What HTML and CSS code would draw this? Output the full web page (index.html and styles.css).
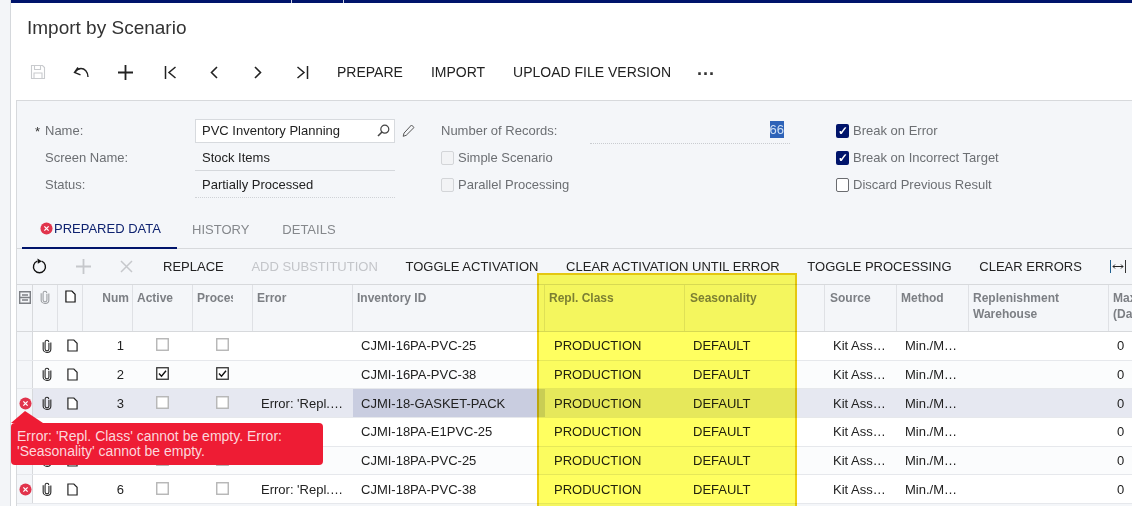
FILE: index.html
```html
<!DOCTYPE html>
<html lang="en">
<head>
<meta charset="utf-8">
<title>Import by Scenario</title>
<link rel="stylesheet" href="styles.css">
</head>
<body>
<svg class="defs" width="0" height="0" aria-hidden="true">
  <symbol id="clip" viewBox="0 0 12 16"><path d="M8.300 4.500v7a2.300 2.300 0 0 1-4.600 0V3.400a2.200 2.200 0 0 1 4.400-.2M8.300 4v7.500M10.600 3.800v8a4.600 3.800 0 0 1-9.200 0V3.500" fill="none" stroke="currentColor" stroke-width="1.300"/></symbol>
  <symbol id="note" viewBox="0 0 12 14"><path d="M1 1h6.500L11 4.500V13H1z" fill="#fff" stroke="currentColor" stroke-width="1.300"/></symbol>
  <symbol id="err" viewBox="0 0 14 14"><circle cx="7" cy="7" r="6.500" fill="#e1344c"/><path d="M4.700 4.700l4.600 4.600M9.300 4.700l-4.600 4.600" stroke="#fff" stroke-width="1.400"/></symbol>
  <symbol id="box" viewBox="0 0 13 13"><rect x=".75" y=".75" width="11.500" height="11.500" fill="#fff" stroke="#b5b5b5" stroke-width="1.400"/></symbol>
  <symbol id="boxon" viewBox="0 0 13 13"><rect x=".75" y=".75" width="11.500" height="11.500" fill="#fff" stroke="#333" stroke-width="1.300"/><path d="M3 6.600l2.500 2.600L10 3.800" fill="none" stroke="#111" stroke-width="1.400"/></symbol>
</svg>
<div class="page">
  <aside class="rail"></aside>
  <main class="main">
    <div class="topbar"><i></i><i></i></div>
    <h1 class="title">Import by Scenario</h1>
    <nav class="toolbar">
      <span class="tool"><svg class="ic muted" width="16" height="16" viewBox="0 0 16 16"><path d="M1.500 1.500h11l2 2v11h-13zM4.500 1.500v4h6v-4M4 14.500V9h8v5.500" fill="none" stroke="currentColor" stroke-width="1.100"/></svg></span>
      <span class="tool undo"><svg class="ic" width="17" height="14" viewBox="0 0 17 14"><path d="M15 12C15 6.500 11.500 3.500 8 3.500 5.500 3.500 3.500 5 1.500 7.500M5 2.500L1.500 7.500l6 2.300" fill="none" stroke="currentColor" stroke-width="1.400"/></svg></span>
      <span class="tool plus-t"><svg class="ic" width="15" height="15" viewBox="0 0 15 15"><path d="M0 7.500h15M7.500 0v15" stroke="currentColor" stroke-width="1.800"/></svg></span>
      <span class="tool"><svg class="ic" width="13" height="13" viewBox="0 0 13 13"><path d="M1.500 0v13M11.500 1L5 6.500l6.500 5.500" fill="none" stroke="currentColor" stroke-width="1.500"/></svg></span>
      <span class="tool"><svg class="ic" width="8" height="13" viewBox="0 0 8 13"><path d="M7 1L1.500 6.500 7 12" fill="none" stroke="currentColor" stroke-width="1.600"/></svg></span>
      <span class="tool"><svg class="ic" width="8" height="13" viewBox="0 0 8 13"><path d="M1 1l5.500 5.500L1 12" fill="none" stroke="currentColor" stroke-width="1.600"/></svg></span>
      <span class="tool"><svg class="ic" width="13" height="13" viewBox="0 0 13 13"><path d="M11.500 0v13M1.500 1L8 6.500 1.500 12" fill="none" stroke="currentColor" stroke-width="1.500"/></svg></span>
      <span class="act first">PREPARE</span>
      <span class="act">IMPORT</span>
      <span class="act">UPLOAD FILE VERSION</span>
      <span class="dots">···</span>
    </nav>
    <section class="panel">
      <form class="form">
        <div class="col-a">
          <div class="row"><span class="lbl"><b class="req">*</b>Name:</span>
            <span class="lookup">PVC Inventory Planning<svg width="13" height="13" viewBox="0 0 13 13"><circle cx="7.800" cy="5.200" r="4" fill="none" stroke="#444" stroke-width="1.200"/><path d="M5 8L1 12" stroke="#444" stroke-width="1.600"/></svg></span>
            <svg class="pencil" width="13" height="13" viewBox="0 0 13 13"><path d="M9.500 1l2.500 2.500-7.800 7.800-3 1 .8-3.200z" fill="none" stroke="#555" stroke-width="1"/></svg>
          </div>
          <div class="row"><span class="lbl">Screen Name:</span><span class="val line">Stock Items</span></div>
          <div class="row"><span class="lbl">Status:</span><span class="val dotted">Partially Processed</span></div>
        </div>
        <div class="col-b">
          <div class="row"><span class="lbl2">Number of Records:</span><span class="num-field"><mark>66</mark></span></div>
          <div class="row"><span class="ck off"></span><span class="ck-l">Simple Scenario</span></div>
          <div class="row"><span class="ck off"></span><span class="ck-l">Parallel Processing</span></div>
        </div>
        <div class="col-c">
          <div class="row"><span class="ck on">✓</span><span class="ck-l">Break on Error</span></div>
          <div class="row"><span class="ck on">✓</span><span class="ck-l">Break on Incorrect Target</span></div>
          <div class="row"><span class="ck empty"></span><span class="ck-l">Discard Previous Result</span></div>
        </div>
      </form>
      <div class="tabs">
        <span class="tab active"><svg width="13" height="13"><use href="#err"/></svg>PREPARED DATA</span>
        <span class="tab">HISTORY</span>
        <span class="tab">DETAILS</span>
      </div>
      <div class="gridbar">
        <svg class="gi refresh" width="15" height="16" viewBox="0 0 15 16"><path d="M9.600 3.200a6 6 0 1 1-4.300 0" fill="none" stroke="#111" stroke-width="1.400"/><path d="M5.500.5l4.300 2.700-4 2.600z" fill="#111"/></svg>
        <svg class="gi plus" width="15" height="15" viewBox="0 0 15 15"><path d="M0 7.500h15M7.500 0v15" stroke="#c6c8cc" stroke-width="1.800"/></svg>
        <svg class="gi cross" width="13" height="13" viewBox="0 0 13 13"><path d="M1 1l11 11M12 1L1 12" stroke="#c6c8cc" stroke-width="1.500"/></svg>
        <span class="gact replace">REPLACE</span>
        <span class="gact dim">ADD SUBSTITUTION</span>
        <span class="gact">TOGGLE ACTIVATION</span>
        <span class="gact">CLEAR ACTIVATION UNTIL ERROR</span>
        <span class="gact">TOGGLE PROCESSING</span>
        <span class="gact">CLEAR ERRORS</span>
        <svg class="fit" width="16" height="13" viewBox="0 0 16 13"><path d="M.5 0v13" stroke="#1f5f8f"/><path d="M15.500 0v13" stroke="#333"/><path d="M3 6.500h10M5 4.500l-2 2 2 2M11 4.500l2 2-2 2" fill="none" stroke="#222"/></svg>
      </div>
      <div class="grid">
        <div class="g-row head">
          <div class="c gut"><svg width="12" height="13" viewBox="0 0 12 13"><path d="M.7.700h10.600v11.600H.7zM3 4h6M3 9h6M.7 6.500h10.600" fill="none" stroke="#7c7f84" stroke-width="1.400"/></svg></div>
          <div class="c ico"><svg class="clip-h" width="10" height="14"><use href="#clip"/></svg></div>
          <div class="c ico"><svg class="note-h" width="11" height="13"><use href="#note"/></svg></div>
          <div class="c right">Num</div>
          <div class="c">Active</div>
          <div class="c"><span class="clipped">Process</span></div>
          <div class="c">Error</div>
          <div class="c">Inventory ID</div>
          <div class="c">Repl. Class</div>
          <div class="c p5">Seasonality</div>
          <div class="c p5">Source</div>
          <div class="c">Method</div>
          <div class="c">Replenishment<br>Warehouse</div>
          <div class="c">Max. Stock<br>(Days)</div>
        </div>

        <div class="g-row">
          <div class="c gut"></div><div class="c ico"><svg width="10" height="14"><use href="#clip"/></svg></div><div class="c ico"><svg width="11" height="13"><use href="#note"/></svg></div>
          <div class="c right">1</div><div class="c mid"><svg width="13" height="13"><use href="#box"/></svg></div><div class="c mid"><svg width="13" height="13"><use href="#box"/></svg></div>
          <div class="c"></div><div class="c">CJMI-16PA-PVC-25</div><div class="c">PRODUCTION</div><div class="c">DEFAULT</div><div class="c">Kit Ass…</div><div class="c">Min./M…</div><div class="c"></div><div class="c">0</div>
        </div>
        <div class="g-row alt">
          <div class="c gut"></div><div class="c ico"><svg width="10" height="14"><use href="#clip"/></svg></div><div class="c ico"><svg width="11" height="13"><use href="#note"/></svg></div>
          <div class="c right">2</div><div class="c mid"><svg width="13" height="13"><use href="#boxon"/></svg></div><div class="c mid"><svg width="13" height="13"><use href="#boxon"/></svg></div>
          <div class="c"></div><div class="c">CJMI-16PA-PVC-38</div><div class="c">PRODUCTION</div><div class="c">DEFAULT</div><div class="c">Kit Ass…</div><div class="c">Min./M…</div><div class="c"></div><div class="c">0</div>
        </div>
        <div class="g-row sel">
          <div class="c gut"><svg width="13" height="13"><use href="#err"/></svg></div><div class="c ico"><svg width="10" height="14"><use href="#clip"/></svg></div><div class="c ico"><svg width="11" height="13"><use href="#note"/></svg></div>
          <div class="c right">3</div><div class="c mid"><svg width="13" height="13"><use href="#box"/></svg></div><div class="c mid"><svg width="13" height="13"><use href="#box"/></svg></div>
          <div class="c">Error: 'Repl.…</div><div class="c cur">CJMI-18-GASKET-PACK</div><div class="c">PRODUCTION</div><div class="c">DEFAULT</div><div class="c">Kit Ass…</div><div class="c">Min./M…</div><div class="c"></div><div class="c">0</div>
        </div>
        <div class="g-row">
          <div class="c gut"></div><div class="c ico"><svg width="10" height="14"><use href="#clip"/></svg></div><div class="c ico"><svg width="11" height="13"><use href="#note"/></svg></div>
          <div class="c right">4</div><div class="c mid"><svg width="13" height="13"><use href="#box"/></svg></div><div class="c mid"><svg width="13" height="13"><use href="#box"/></svg></div>
          <div class="c"></div><div class="c">CJMI-18PA-E1PVC-25</div><div class="c">PRODUCTION</div><div class="c">DEFAULT</div><div class="c">Kit Ass…</div><div class="c">Min./M…</div><div class="c"></div><div class="c">0</div>
        </div>
        <div class="g-row alt">
          <div class="c gut"></div><div class="c ico"><svg width="10" height="14"><use href="#clip"/></svg></div><div class="c ico"><svg width="11" height="13"><use href="#note"/></svg></div>
          <div class="c right">5</div><div class="c mid"><svg width="13" height="13"><use href="#box"/></svg></div><div class="c mid"><svg width="13" height="13"><use href="#box"/></svg></div>
          <div class="c"></div><div class="c">CJMI-18PA-PVC-25</div><div class="c">PRODUCTION</div><div class="c">DEFAULT</div><div class="c">Kit Ass…</div><div class="c">Min./M…</div><div class="c"></div><div class="c">0</div>
        </div>
        <div class="g-row">
          <div class="c gut"><svg width="13" height="13"><use href="#err"/></svg></div><div class="c ico"><svg width="10" height="14"><use href="#clip"/></svg></div><div class="c ico"><svg width="11" height="13"><use href="#note"/></svg></div>
          <div class="c right">6</div><div class="c mid"><svg width="13" height="13"><use href="#box"/></svg></div><div class="c mid"><svg width="13" height="13"><use href="#box"/></svg></div>
          <div class="c">Error: 'Repl.…</div><div class="c">CJMI-18PA-PVC-38</div><div class="c">PRODUCTION</div><div class="c">DEFAULT</div><div class="c">Kit Ass…</div><div class="c">Min./M…</div><div class="c"></div><div class="c">0</div>
        </div>
      </div>
    </section>
  </main>
  <div class="highlight"></div>
  <div class="tooltip">Error: 'Repl. Class' cannot be empty. Error: 'Seasonality' cannot be empty.</div>
</div>
</body>
</html>
```
FILE: styles.css
```css
* { box-sizing: border-box; }
html, body { margin: 0; padding: 0; background: #fff; }
body { font-family: "Liberation Sans", Arial, sans-serif; color: #222; font-size: 13px; }
.defs { position: absolute; }
.page { position: relative; width: 1132px; height: 506px; overflow: hidden; display: flex; }
.rail { width: 10px; flex: none; background: #f3f5f8; }
.main { flex: 1; min-width: 0; border-left: 1px solid #d5d8dc; display: flex; flex-direction: column; }
.topbar { height: 3px; flex: none; background: #00146b; display: flex; padding-left: 280px; gap: 51px; }
.topbar i { width: 1px; background: #cfd4e6; }
.title { margin: 15px 0 0 16px; height: 20px; font-size: 19px; line-height: 20px; font-weight: 400; color: #333; }
.toolbar { height: 24px; margin-top: 22px; flex: none; display: flex; align-items: center; padding-left: 16px; color: #222; }
.tool { width: 44px; display: flex; justify-content: center; align-items: center; flex: none; }
.tool:first-child { width: 22px; justify-content: flex-start; margin-right: 11px; padding-left: 3px; }
.undo { padding-right: 1px; }
.plus-t { padding-right: 2px; }
.muted { color: #c9cbce; }
.act { font-size: 14px; margin-left: 28px; }
.act.first { margin-left: 13px; }
.dots { margin-left: 26px; font-size: 18px; font-weight: 700; line-height: 24px; padding-top: 3px; color: #333; }
.panel { margin: 16px 0 0 5px; flex: 1; background: #f4f6f9; border: 1px solid #d7d9dc; border-right: 0; border-bottom: 0; min-height: 0; }
.form { display: flex; height: 110px; padding-top: 16px; font-size: 13px; }
.row { height: 27px; display: flex; align-items: center; }
.col-a { width: 424px; flex: none; }
.col-b { width: 395px; flex: none; }
.col-a .lbl { width: 178px; padding-left: 28px; color: #6c6f73; position: relative; flex: none; }
.req { position: absolute; left: 18px; top: 1px; font-weight: 400; color: #333; }
.lookup { width: 200px; height: 24px; display: flex; align-items: center; justify-content: space-between; padding: 0 4px 0 6px; background: #fff; border: 1px solid #d7dade; color: #222; flex: none; }
.pencil { margin-left: 7px; }
.val { width: 200px; height: 27px; line-height: 27px; padding-left: 7px; color: #222; flex: none; }
.line { border-bottom: 1px solid #d5d8dc; }
.dotted { border-bottom: 1px dotted #cfd2d6; }
.lbl2 { width: 149px; color: #6c6f73; flex: none; }
.num-field { width: 200px; height: 27px; line-height: 26px; text-align: right; padding-right: 6px; border-bottom: 1px dotted #c9ccd0; }
mark { background: #2e63b8; color: #cfe0f5; padding: 1px 0; }
.ck { width: 13px; height: 14px; border-radius: 2px; flex: none; margin-right: 4px; font-size: 12px; font-weight: 700; line-height: 14px; text-align: center; }
.ck.off { background: #f2f3f5; border: 1px solid #d3d5d8; }
.ck.on { background: #00146b; color: #fff; }
.ck.empty { background: #fff; border: 1px solid #6a6c70; }
.ck-l { color: #6c6f73; }
.tabs { height: 38px; display: flex; padding-left: 5px; border-bottom: 1px solid #d7d9dc; font-size: 13px; position: relative; white-space: nowrap; }
.tab { height: 38px; padding: 0 16px 2px; color: #85888c; display: flex; align-items: center; }
.tab:last-child { padding-left: 17px; }
.tab svg { margin-right: 1px; flex: none; }
.tab.active { color: #0f2370; padding: 0 15px 2px 18px; border-bottom: 2px solid #00146b; width: 155px; margin-right: -1px; }
.gridbar { height: 36px; padding-bottom: 1px; display: flex; align-items: center; border-bottom: 1px solid #d7d9dc; white-space: nowrap; }
.gi { flex: none; }
.refresh { margin-left: 15px; }
.plus { margin-left: 29px; }
.cross { margin-left: 29px; }
.gact { font-size: 13px; margin-left: 27.700px; color: #222; }
.gact.replace { margin-left: 30px; }
.gact.dim { color: #c3c5c9; }
.fit { margin-left: 28px; flex: none; }
.grid { width: 1240px; font-size: 13px; }
.g-row { display: grid; grid-template-columns: 16px 25px 25px 50px 60px 60px 100px 192px 140px 140px 72px 72px 140px 132px; height: 28.670px; border-bottom: 1px solid #e6e8ec; background: #fff; align-items: stretch; }
.g-row.alt { background: #fbfcfd; }
.g-row.head { height: 47px; background: #f4f6f9; border-bottom: 1px solid #d7d9dc; font-size: 12px; font-weight: 700; color: #7c7f84; line-height: 16px; }
.g-row.sel { background: #e6e8f1; }
.c { padding: 0 4px 0 8px; display: flex; align-items: center; white-space: nowrap; overflow: hidden; color: #222; }
.g-row:not(.head) .c:nth-child(9) { padding-left: 9px; }
.head .c { padding: 5px 4px 0 4px; border-right: 1px solid #dfe1e5; color: #7c7f84; display: block; }
.c.gut { background: #f4f6f9; border-right: 1px solid #d7d9dc; padding: 0 0 0 1px; justify-content: center; }
.head .c.gut { padding: 6px 0 0 2px; text-align: left; }
.c.ico { justify-content: center; padding: 0 0 0 3px; color: #222; }
.head .c.ico { text-align: center; padding: 5px 0 0; }
.clip-h { color: #9a9da1; }
.note-h { color: #111; }
.c.right { justify-content: flex-end; padding-right: 9px; }
.head .c.right { text-align: right; padding-right: 3px; }
.c.mid { justify-content: center; padding: 0 2px 2px 0; }
.clipped { display: block; width: 36px; overflow: hidden; }
.head .c.p5 { padding-left: 5px; }
.g-row.sel .c.cur { background: #c9cde0; }
.highlight { position: absolute; left: 537px; top: 273px; width: 260px; height: 240px; background: #ffff60; border: 2px solid #efcf10; mix-blend-mode: multiply; }
.tooltip { position: absolute; left: 11px; top: 423px; width: 312px; height: 42px; padding: 6px 6px 0 6px; background: #ee1c34; border-radius: 4px; color: #fcd7dc; font-size: 14px; line-height: 15px; }
.tooltip::before { content: ""; position: absolute; left: 0; top: -12px; border-style: solid; border-color: transparent transparent #ee1c34; border-width: 0 18px 12px 14px; }
```
